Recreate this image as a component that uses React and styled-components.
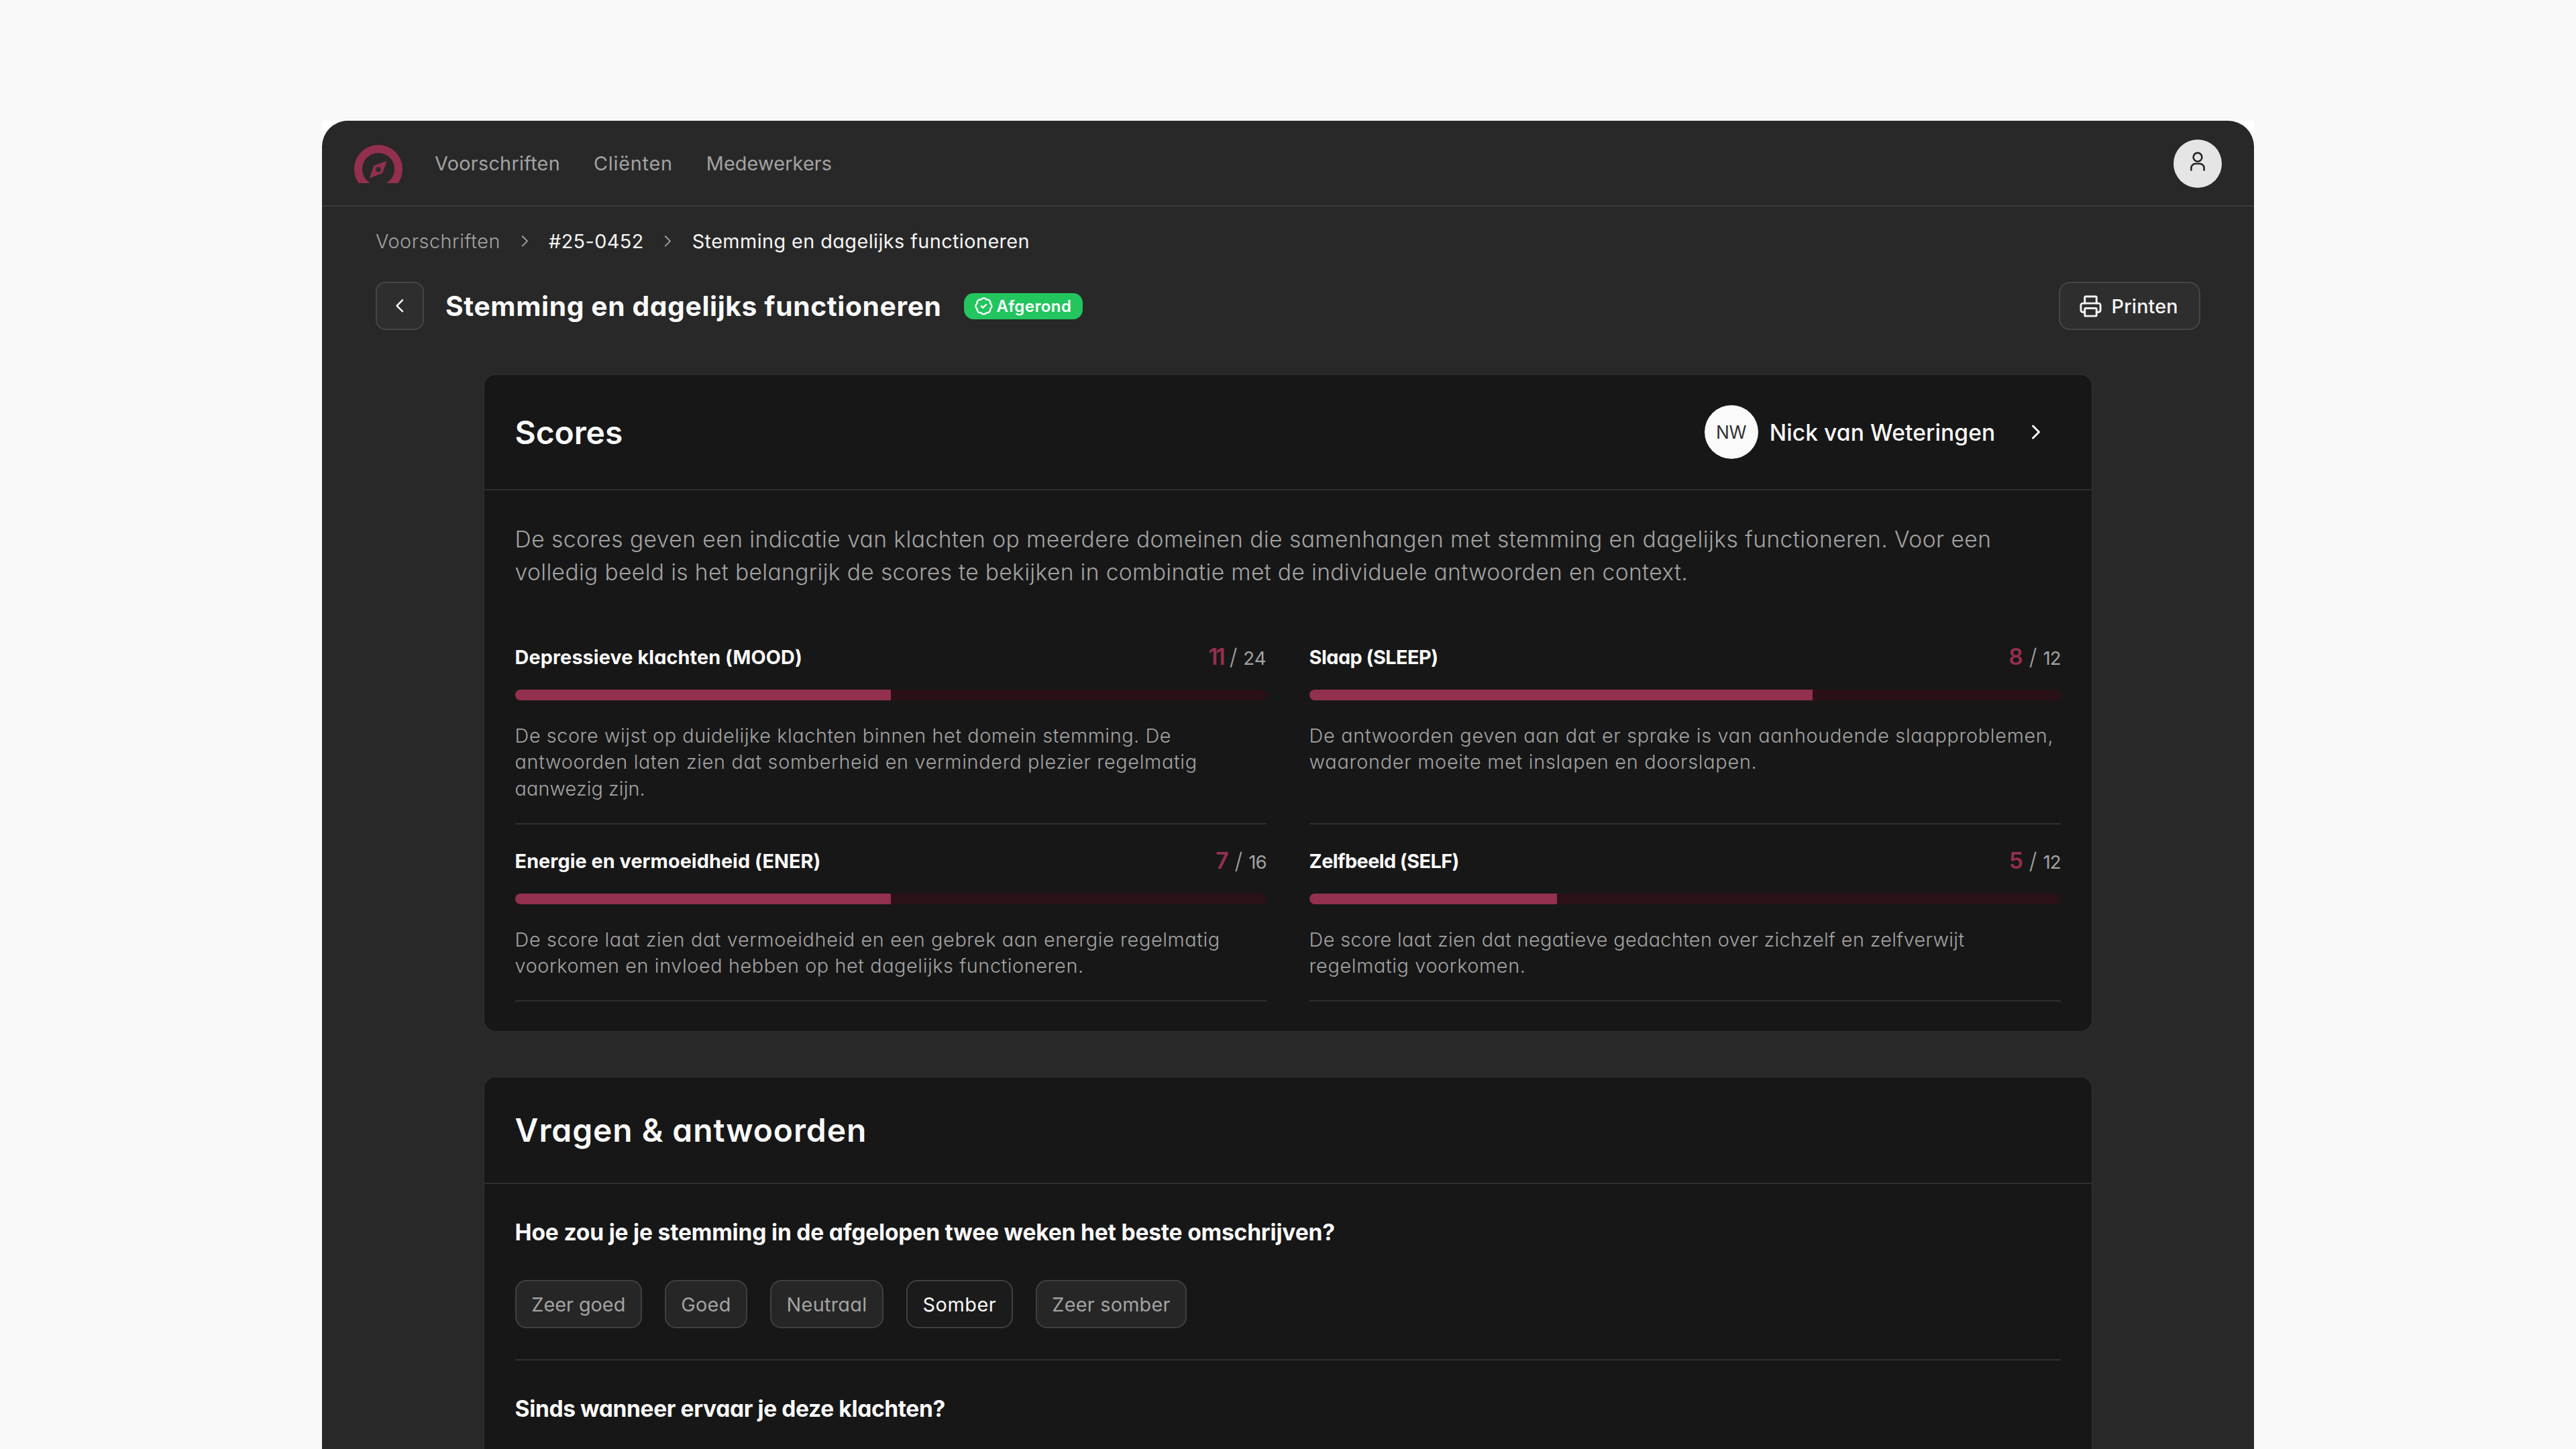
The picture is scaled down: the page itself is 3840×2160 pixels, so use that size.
import React from 'react';
import styled, { createGlobalStyle } from 'styled-components';
import { ChevronLeft, ChevronRight, Printer, BadgeCheck } from 'lucide-react';

const Global = createGlobalStyle`
  html, body { margin: 0; height: 2160px; overflow: hidden; background: #f9f9f9; }
  #root { height: 2160px; overflow: hidden; }
  * { box-sizing: border-box; }
  body { font-family: Inter, "Noto Sans", "Liberation Sans", sans-serif; font-feature-settings: "cv11"; }
`;

const Stage = styled.div`
  width: 2880px;
  height: 1980px;
  margin: 180px auto 0;
  background: #fff;
  overflow: hidden;
`;
const Win = styled.div`
  height: 100%;
  background: #282828;
  border-radius: 38.4px 38.4px 0 0;
  overflow: hidden;
`;
const Header = styled.header`
  height: 128px;
  padding: 0 48px;
  display: flex;
  align-items: center;
  border-bottom: 2.4px solid #3b3b3b;
`;
const LogoMark = styled.svg`
  width: 72px;
  height: 57px;
  margin: 2.4px 48px 0 0;
  flex: none;
`;
const Nav = styled.nav`
  display: flex;
  gap: 50px;
  flex: 1;
`;
const NavLink = styled.a`
  font-size: 28.8px;
  font-weight: 400;
  letter-spacing: ${p => p.$ls}px;
  color: #a3a3a3;
`;
const UserButton = styled.div`
  width: 72px;
  height: 72px;
  border-radius: 50%;
  background: #e5e5e5;
  display: flex;
  align-items: center;
  justify-content: center;
  margin-top: 1px;
`;
const Content = styled.main`
  padding: 27px 80px 0;
`;
const Crumbs = styled.div`
  display: flex;
  align-items: center;
  gap: 21.6px;
  height: 48px;
  font-size: 28.8px;
  letter-spacing: 0.42px;
  color: #a3a3a3;
  svg { flex: none; stroke-width: 1.6; }
`;
const CrumbMuted = styled.span`
  font-weight: 300;
  letter-spacing: 0.54px;
`;
const CrumbActive = styled.span`
  color: #f5f5f5;
  font-weight: 400;
`;
const TitleRow = styled.div`
  margin-top: 37px;
  height: 72px;
  display: flex;
  align-items: center;
`;
const SquareButton = styled.button`
  width: 72px;
  height: 72px;
  padding: 0;
  margin-right: 32px;
  border: 2.4px solid #454545;
  border-radius: 14.4px;
  background: #2e2e2e;
  color: #f5f5f5;
  display: flex;
  align-items: center;
  justify-content: center;
`;
const PageTitle = styled.h1`
  margin: 0 33.6px 0 0;
  font-size: 40.8px;
  font-weight: 650;
  letter-spacing: 0.6px;
  color: #fafafa;
`;
const Badge = styled.span`
  height: 39px;
  padding: 0 17px 0 14.4px;
  display: flex;
  align-items: center;
  gap: 5px;
  border-radius: 14.4px;
  background: #22c55e;
  color: #fff;
  font-size: 24px;
  font-weight: 600;
  letter-spacing: 0.43px;
`;
const PrintButton = styled.button`
  margin-left: auto;
  height: 72px;
  width: 211px;
  padding: 0 0 0 27.6px;
  border: 2.4px solid #454545;
  border-radius: 16.8px;
  background: #2e2e2e;
  color: #f5f5f5;
  display: flex;
  align-items: center;
  gap: 14px;
  font-family: inherit;
  font-feature-settings: inherit;
  font-size: 28.8px;
  font-weight: 500;
  letter-spacing: 0.1px;
`;
const Cards = styled.div`
  width: 2400px;
  margin: 65px auto 0;
  display: flex;
  flex-direction: column;
  gap: 64.8px;
`;
const Card = styled.section`
  background: #171717;
  border: 2.4px solid #2c2c2c;
  border-radius: 19.2px;
`;
const CardHead = styled.div`
  height: ${p => p.$h}px;
  padding: 0 45.6px;
  display: flex;
  align-items: center;
  justify-content: space-between;
  border-bottom: 2.4px solid #2f2f2f;
`;
const CardTitle = styled.h2`
  margin: 0;
  font-size: 48px;
  font-weight: 600;
  letter-spacing: ${p => p.$ls}px;
  color: #fafafa;
`;
const Client = styled.div`
  display: flex;
  align-items: center;
  gap: 17px;
  padding-right: 19px;
`;
const Initials = styled.span`
  width: 80px;
  height: 80px;
  border-radius: 50%;
  background: #fafafa;
  color: #333;
  display: flex;
  align-items: center;
  justify-content: center;
  font-size: 26.4px;
  letter-spacing: -0.4px;
`;
const ClientName = styled.span`
  font-size: 33.6px;
  font-weight: 550;
  letter-spacing: 0.1px;
  color: #fafafa;
  margin-right: 26px;
`;
const ScoresBody = styled.div`
  padding: 48px 45.6px 44.4px;
`;
const Intro = styled.div`
  font-size: 33.6px;
  line-height: 49px;
  font-weight: 300;
  color: #a3a3a3;
  white-space: nowrap;
`;
const TextLine = styled.span`
  display: block;
  letter-spacing: ${p => p.$ls}px;
`;
const ScoreGrid = styled.div`
  margin-top: 82.4px;
  display: grid;
  grid-template-columns: 1120px 1120px;
  column-gap: 64px;
  row-gap: 34.8px;
`;
const ScoreItem = styled.article`
  padding-bottom: 31.2px;
  border-bottom: 2.4px solid #2f2f2f;
`;
const ScoreTop = styled.div`
  height: 40px;
  display: flex;
  align-items: center;
  justify-content: space-between;
`;
const ScoreName = styled.h3`
  margin: 0;
  font-size: 28.8px;
  font-weight: 650;
  letter-spacing: ${p => p.$ls}px;
  color: #fafafa;
`;
const ScoreValue = styled.div`
  display: flex;
  align-items: baseline;
  gap: 9px;
  line-height: 40px;
`;
const Value = styled.span`
  font-size: 33.6px;
  font-weight: 600;
  letter-spacing: ${p => p.$ls}px;
  color: #93304d;
`;
const Slash = styled.span`
  font-size: 33.6px;
  font-weight: 300;
  color: #a3a3a3;
`;
const Total = styled.span`
  font-size: 27.6px;
  font-weight: 400;
  letter-spacing: ${p => p.$ls}px;
  color: #a3a3a3;
`;
const Track = styled.div`
  margin-top: 28px;
  height: 16px;
  border-radius: 8px;
  background: #2b1117;
  overflow: hidden;
`;
const Fill = styled.div`
  width: ${p => p.$pct}%;
  height: 100%;
  background: #93304d;
`;
const ScoreText = styled.div`
  margin-top: 33px;
  min-height: ${p => p.$rows * 39.6}px;
  font-size: 28.8px;
  line-height: 39.6px;
  font-weight: 300;
  color: #a3a3a3;
  white-space: nowrap;
`;
const Question = styled.div`
  margin: 0 45.6px;
  padding: 48px 0 46px;
  & + & { border-top: 2.4px solid #2f2f2f; padding-bottom: 200px; }
`;
const QuestionText = styled.h3`
  margin: 0;
  font-size: 33.6px;
  line-height: 48px;
  font-weight: 650;
  letter-spacing: ${p => p.$ls}px;
  color: #fafafa;
`;
const Options = styled.div`
  margin-top: 47.5px;
  display: flex;
  gap: 33.6px;
`;
const Option = styled.span`
  height: 72px;
  padding: 0 22.7px;
  display: flex;
  align-items: center;
  border: 2.4px solid #404040;
  border-radius: 16.8px;
  font-size: 28.8px;
  letter-spacing: ${p => p.$ls}px;
  background: ${p => (p.$on ? '#1b1b1b' : '#262626')};
  color: ${p => (p.$on ? '#fafafa' : '#a3a3a3')};
`;

const scores = [
  { name: 'Depressieve klachten (MOOD)', nls: 0.1, v: '11', vls: -3, t: '24', pct: 50, rows: 3, lines: [['De score wijst op duidelijke klachten binnen het domein stemming. De', 0.58], ['antwoorden laten zien dat somberheid en verminderd plezier regelmatig', 0.69], ['aanwezig zijn.', 0.1]] },
  { name: 'Slaap (SLEEP)', nls: -0.5, v: '8', vls: 0, t: '12', tls: -1, pct: 67, rows: 3, lines: [['De antwoorden geven aan dat er sprake is van aanhoudende slaapproblemen,', 0.7], ['waaronder moeite met inslapen en doorslapen.', 0.76]] },
  { name: 'Energie en vermoeidheid (ENER)', nls: 0.05, v: '7', vls: 0, t: '16', tls: -1, pct: 50, rows: 2, lines: [['De score laat zien dat vermoeidheid en een gebrek aan energie regelmatig', 0.63], ['voorkomen en invloed hebben op het dagelijks functioneren.', 0.6]] },
  { name: 'Zelfbeeld (SELF)', nls: -0.55, v: '5', vls: 0, t: '12', tls: -1, pct: 33, rows: 2, lines: [['De score laat zien dat negatieve gedachten over zichzelf en zelfverwijt', 0.36], ['regelmatig voorkomen.', 0.65]] },
];
const options = [
  { label: 'Zeer goed', ls: 0 },
  { label: 'Goed', ls: 0.3 },
  { label: 'Neutraal', ls: 0.3 },
  { label: 'Somber', ls: 0.6, on: true },
  { label: 'Zeer somber', ls: 0.25 },
];

const Logo = () => (
  <LogoMark viewBox="0 0 72 57" aria-label="Logo">
    <circle cx="36" cy="36" r="30" fill="none" stroke="#93304d" strokeWidth="12" />
    <path d="M48.7 24 L42 42.3 L22.7 49.7 L29.3 30.7 Z" fill="#93304d" />
    <circle cx="36" cy="36.7" r="4" fill="#2e2e2e" />
  </LogoMark>
);
const UserIcon = () => (
  <svg width="28" height="36" viewBox="0 0 28 36" fill="none" stroke="#262626" strokeWidth="2.6" strokeLinecap="round">
    <circle cx="14" cy="8.3" r="6.4" />
    <path d="M4.4 27.6 v-3 a6.6 6.6 0 0 1 6.6-6.6 h6 a6.6 6.6 0 0 1 6.6 6.6 v3" />
  </svg>
);

export default function App() {
  return (
    <Stage>
      <Global />
      <Win>
        <Header>
          <Logo />
          <Nav>
            <NavLink $ls={0.28}>Voorschriften</NavLink>
            <NavLink $ls={0.75}>Cliënten</NavLink>
            <NavLink $ls={0.15}>Medewerkers</NavLink>
          </Nav>
          <UserButton><UserIcon /></UserButton>
        </Header>
        <Content>
          <Crumbs>
            <CrumbMuted>Voorschriften</CrumbMuted>
            <ChevronRight size={28.8} />
            <CrumbActive>#25-0452</CrumbActive>
            <ChevronRight size={28.8} />
            <CrumbActive>Stemming en dagelijks functioneren</CrumbActive>
          </Crumbs>
          <TitleRow>
            <SquareButton aria-label="Terug"><ChevronLeft size={33.6} strokeWidth={1.8} /></SquareButton>
            <PageTitle>Stemming en dagelijks functioneren</PageTitle>
            <Badge><BadgeCheck size={28.8} strokeWidth={2} />Afgerond</Badge>
            <PrintButton><Printer size={35} strokeWidth={2} />Printen</PrintButton>
          </TitleRow>
          <Cards>
            <Card>
              <CardHead $h={172.4}>
                <CardTitle $ls={-0.1}>Scores</CardTitle>
                <Client>
                  <Initials>NW</Initials>
                  <ClientName>Nick van Weteringen</ClientName>
                  <ChevronRight size={36} color="#fafafa" strokeWidth={2} />
                </Client>
              </CardHead>
              <ScoresBody>
                <Intro>
                  <TextLine $ls={0.45}>De scores geven een indicatie van klachten op meerdere domeinen die samenhangen met stemming en dagelijks functioneren. Voor een</TextLine>
                  <TextLine $ls={0.345}>volledig beeld is het belangrijk de scores te bekijken in combinatie met de individuele antwoorden en context.</TextLine>
                </Intro>
                <ScoreGrid>
                  {scores.map(s => (
                    <ScoreItem key={s.name}>
                      <ScoreTop>
                        <ScoreName $ls={s.nls}>{s.name}</ScoreName>
                        <ScoreValue>
                          <Value $ls={s.vls}>{s.v}</Value>
                          <Slash>/</Slash>
                          <Total $ls={s.tls || 0}>{s.t}</Total>
                        </ScoreValue>
                      </ScoreTop>
                      <Track><Fill $pct={s.pct} /></Track>
                      <ScoreText $rows={s.rows}>
                        {s.lines.map(([l, ls]) => <TextLine key={l} $ls={ls}>{l}</TextLine>)}
                      </ScoreText>
                    </ScoreItem>
                  ))}
                </ScoreGrid>
              </ScoresBody>
            </Card>
            <Card>
              <CardHead $h={158.6}>
                <CardTitle $ls={0.9}>Vragen &amp; antwoorden</CardTitle>
              </CardHead>
              <Question>
                <QuestionText $ls={-0.2}>Hoe zou je je stemming in de afgelopen twee weken het beste omschrijven?</QuestionText>
                <Options>
                  {options.map(o => <Option key={o.label} $ls={o.ls} $on={o.on}>{o.label}</Option>)}
                </Options>
              </Question>
              <Question>
                <QuestionText $ls={-0.4}>Sinds wanneer ervaar je deze klachten?</QuestionText>
              </Question>
            </Card>
          </Cards>
        </Content>
      </Win>
    </Stage>
  );
}
